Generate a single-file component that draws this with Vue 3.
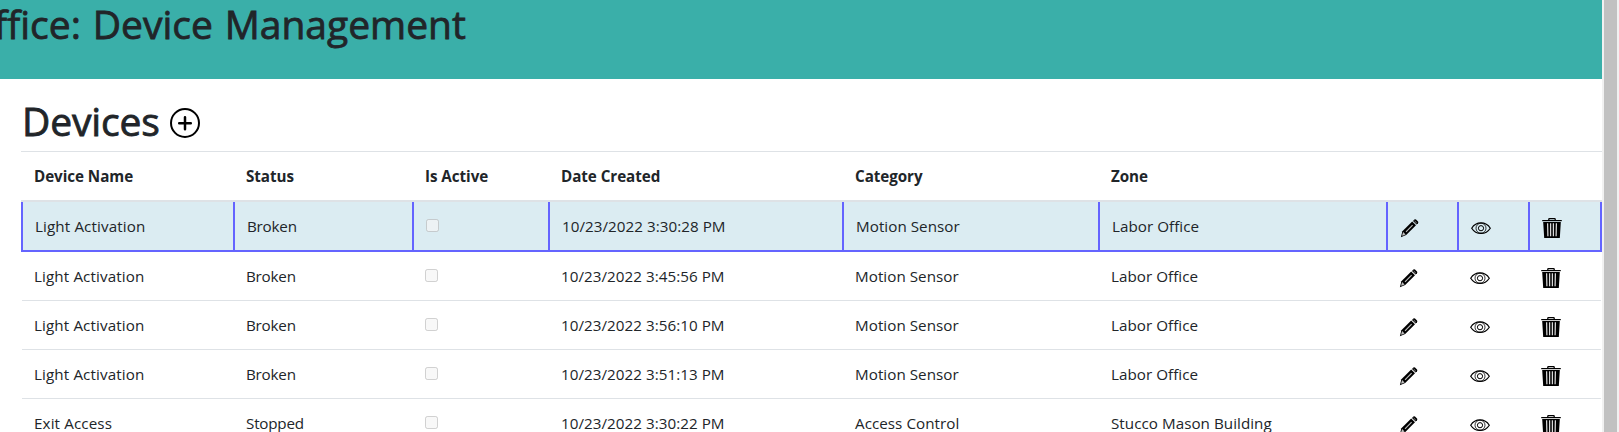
<script setup>
const columns = ['Device Name', 'Status', 'Is Active', 'Date Created', 'Category', 'Zone', '', '', '']
const devices = [
  { name: 'Light Activation', status: 'Broken', created: '10/23/2022 3:30:28 PM', category: 'Motion Sensor', zone: 'Labor Office', selected: true },
  { name: 'Light Activation', status: 'Broken', created: '10/23/2022 3:45:56 PM', category: 'Motion Sensor', zone: 'Labor Office' },
  { name: 'Light Activation', status: 'Broken', created: '10/23/2022 3:56:10 PM', category: 'Motion Sensor', zone: 'Labor Office' },
  { name: 'Light Activation', status: 'Broken', created: '10/23/2022 3:51:13 PM', category: 'Motion Sensor', zone: 'Labor Office' },
  { name: 'Exit Access', status: 'Stopped', created: '10/23/2022 3:30:22 PM', category: 'Access Control', zone: 'Stucco Mason Building' },
]
</script>

<template>
  <div class="page">
    <div class="content">
      <header class="banner"><h1 class="title">ffice: Device Management</h1></header>
      <div class="heading">
        <h1 class="subtitle">Devices</h1>
        <svg class="add" viewBox="0 0 30 30" width="30" height="30">
          <circle cx="15" cy="15" r="14" fill="none" stroke="#000" stroke-width="2" />
          <path d="M15 9.2V21.2M9.2 15.2H20.8" stroke="#000" stroke-width="2.5" stroke-linecap="round" />
        </svg>
      </div>
      <div class="table">
        <div class="row head">
          <div v-for="(c, i) in columns" :key="i" class="cell"><span class="label">{{ c }}</span></div>
        </div>
        <div v-for="d in devices" :key="d.created" class="row" :class="{ selected: d.selected }">
          <div class="cell"><span class="label name">{{ d.name }}</span></div>
          <div class="cell"><span class="label status">{{ d.status }}</span></div>
          <div class="cell"><input class="check" type="checkbox" disabled /></div>
          <div class="cell"><span class="label">{{ d.created }}</span></div>
          <div class="cell"><span class="label">{{ d.category }}</span></div>
          <div class="cell"><span class="label">{{ d.zone }}</span></div>
          <div class="cell">
            <svg class="icon" viewBox="0 0 20 20" width="20" height="20">
              <path d="M2.4 13.3L12.2 3.5L16 7.3L6.2 17.1L.9 19.2Z" fill="#000" />
              <path d="M3.2 14.1L5.6 16.4L2.6 17.7L2.1 17.2Z" fill="#fff" fill-opacity=".75" />
              <path d="M6 13.8L12.6 7.2" stroke="#fff" stroke-opacity=".75" stroke-width="1.1" />
              <path d="M13 3L14.4 1.6Q15.2 .9 16 1.6L18 3.6Q18.7 4.4 18 5.2L16.6 6.6Z" fill="#000" />
              <path d="M14.6 3L16.8 5.2" stroke="#fff" stroke-opacity=".6" stroke-width=".9" />
            </svg>
          </div>
          <div class="cell">
            <svg class="icon" viewBox="0 0 20 20" width="20" height="20" fill="none" stroke="#000">
              <path d="M.7 10.2C5.2 3.2 14.8 3.2 19.3 10.2C14.8 17.2 5.2 17.2 .7 10.2Z" stroke-width="1.2" />
              <circle cx="10" cy="10.2" r="5" stroke-width=".8" />
              <circle cx="10" cy="10.2" r="2.6" stroke-width="1" />
            </svg>
          </div>
          <div class="cell">
            <svg class="icon" viewBox="0 0 20 20" width="20" height="20">
              <path d="M6.8 2V1.2Q6.8 .7 7.4 .7H12.6Q13.2 .7 13.2 1.2V2" fill="none" stroke="#000" stroke-width="1.3" />
              <path d="M.2 2H19.8V3.2H.2Z" fill="#000" />
              <path d="M1.2 4H18.8L17.8 20H2.2Z" fill="#000" />
              <path d="M5.6 5.2L5.9 18.2M8.6 5.2V18.2M11.4 5.2V18.2M14.4 5.2L14.1 18.2" stroke="#fff" stroke-opacity=".85" stroke-width="1.25" />
            </svg>
          </div>
        </div>
      </div>
    </div>
    <div class="scrollbar"><div class="thumb"></div></div>
  </div>
</template>

<style>
body { overflow: hidden; }
</style>

<style scoped>
.page {
  display: flex;
  width: 1619px;
  height: 432px;
  overflow: hidden;
  background: #fff;
  color: #212529;
  font-family: "Segoe UI", "Open Sans", "Noto Sans", sans-serif;
  font-size: 15.2px;
}
.content { width: 1602px; flex: none; overflow: hidden; }
.banner { height: 79px; background: #3aafa9; overflow: hidden; }
.title, .subtitle {
  margin: 0;
  font-size: 39px;
  font-weight: 500;
  line-height: 48px;
  letter-spacing: 0;
  white-space: nowrap;
  -webkit-text-stroke: 0.8px #212529;
}
.title { margin-left: -6px; word-spacing: 1.7px; }
.heading { display: flex; height: 72px; padding-left: 22px; box-sizing: border-box; }
.subtitle { width: 148px; padding-top: 18px; letter-spacing: -0.15px; }
.add { margin-top: 29px; }
.row {
  display: grid;
  grid-template-columns: 212px 179px 136px 294px 256px 288px 71px 71px 72px;
  height: 49px;
  box-sizing: border-box;
  margin: 0 1px 0 22px;
  border-bottom: 1px solid #dee2e6;
}
.cell { display: flex; align-items: flex-start; padding: 12px 0 0 12px; box-sizing: border-box; }
.label { line-height: 24px; white-space: nowrap; letter-spacing: 0.04px; }
.name { letter-spacing: 0.12px; }
.status { letter-spacing: -0.2px; }
.head {
  height: 51px;
  margin: 0 0 0 21px;
  grid-template-columns: 213px 179px 136px 294px 256px 288px 71px 71px 73px;
  border-top: 1px solid #dee2e6;
  border-bottom: 2px solid #dee2e6;
  font-weight: 700;
}
.head .label { letter-spacing: -0.05px; }
.head .cell:first-child { padding-left: 13px; }
.selected {
  height: 50px;
  margin: 0 0 0 21px;
  grid-template-columns: 212px 179px 136px 294px 256px 288px 71px 71px 74px;
  border-bottom: 2px solid #6464ff;
  background: #dbecf2;
}
.selected .cell { border-left: 2px solid #6464ff; }
.selected .cell:last-child { border-right: 2px solid #6464ff; }
.check { width: 13px; height: 13px; margin: 5px 0 0; }
.icon { margin-top: 4px; }
.scrollbar { width: 17px; background: #f1f1f1; }
.thumb { width: 13px; height: 432px; margin-left: 2px; background: #c1c1c1; }
</style>
